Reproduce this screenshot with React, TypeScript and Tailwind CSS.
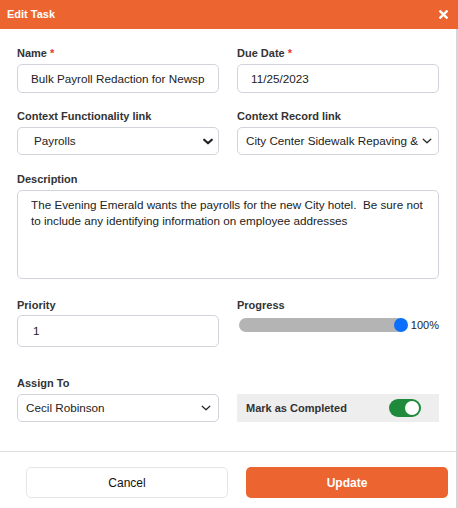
import React from 'react';

const Chevron = ({ bold }: { bold?: boolean }) => (
    <svg
        className={bold ? 'w-[10px] h-[7px] shrink-0' : 'w-[10px] h-[6px] shrink-0'}
        viewBox="0 0 10 6"
        fill="none"
        stroke="#222"
        strokeWidth={bold ? 2.2 : 1.2}
        strokeLinecap="round"
        strokeLinejoin="round"
    >
        <path d="M1.2 1.2L5 4.8l3.8-3.6" />
    </svg>
);

const Label = ({ children, required }: { children: React.ReactNode; required?: boolean }) => (
    <div className="text-[11px] leading-[13px] font-bold text-[#333]">
        {children}
        {required && <span className="text-[#e53935]"> *</span>}
    </div>
);

export default function App() {
    return (
        <div className="w-[458px] h-[508px] bg-white font-['Liberation_Sans',Arial,sans-serif] flex flex-col">
            {/* Header */}
            <div className="h-[29px] bg-[#ec6430] flex items-center justify-between pl-[7px] pr-[10px] shrink-0">
                <span className="text-white text-[11px] font-bold">Edit Task</span>
                <svg className="w-[9px] h-[9px]" viewBox="0 0 10 10" stroke="white" strokeWidth="2.6" strokeLinecap="square">
                    <path d="M1.5 1.5l7 7M8.5 1.5l-7 7" />
                </svg>
            </div>

            {/* Body */}
            <div className="flex-1 border-r-2 border-[#d6d6d6] flex flex-col">
                <div className="px-[17px] pt-[18px] h-[423px] border-b border-[#dedede]">
                    {/* Row 1 */}
                    <div className="grid grid-cols-2 gap-x-[18px]">
                        <div>
                            <Label required>Name</Label>
                            <div className="mt-[4px] h-[29px] border border-[#d2d4dc] rounded-[5px] pl-[13px] pr-[13px] flex items-center overflow-hidden">
                                <span className="text-[11.7px] text-[#222] whitespace-nowrap">Bulk Payroll Redaction for Newsp</span>
                            </div>
                        </div>
                        <div>
                            <Label required>Due Date</Label>
                            <div className="mt-[4px] h-[29px] border border-[#d2d4dc] rounded-[5px] pl-[13px] flex items-center">
                                <span className="text-[11.7px] text-[#222]">11/25/2023</span>
                            </div>
                        </div>
                    </div>

                    {/* Row 2 */}
                    <div className="grid grid-cols-2 gap-x-[18px] mt-[17px]">
                        <div>
                            <Label>Context Functionality link</Label>
                            <div className="mt-[4px] h-[28px] border border-[#d2d4dc] rounded-[5px] pl-[16px] pr-[5px] flex items-center justify-between">
                                <span className="text-[11.7px] text-[#222]">Payrolls</span>
                                <Chevron bold />
                            </div>
                        </div>
                        <div>
                            <Label>Context Record link</Label>
                            <div className="mt-[4px] h-[28px] border border-[#d2d4dc] rounded-[5px] pl-[8px] pr-[6px] flex items-center justify-between gap-[3px]">
                                <span className="text-[11.7px] text-[#222] whitespace-nowrap">City Center Sidewalk Repaving &amp;</span>
                                <Chevron />
                            </div>
                        </div>
                    </div>

                    {/* Row 3 */}
                    <div className="mt-[18px]">
                        <Label>Description</Label>
                        <div className="mt-[4px] h-[89px] border border-[#d2d4dc] rounded-[5px] pl-[13px] pr-[8px] pt-[6px] text-[11.7px] leading-[16px] text-[#222] whitespace-pre-wrap">
                            {'The Evening Emerald wants the payrolls for the new City hotel.  Be sure not to include any identifying information on employee addresses'}
                        </div>
                    </div>

                    {/* Row 4 */}
                    <div className="grid grid-cols-2 gap-x-[18px] mt-[20px]">
                        <div>
                            <Label>Priority</Label>
                            <div className="mt-[3px] h-[32px] border border-[#d2d4dc] rounded-[5px] pl-[15px] flex items-center">
                                <span className="text-[11.7px] text-[#222]">1</span>
                            </div>
                        </div>
                        <div>
                            <Label>Progress</Label>
                            <div className="mt-[5px] pl-[2px] flex items-center">
                                <div className="relative w-[167px] h-[14px] rounded-full bg-[#b4b4b4]">
                                    <div className="absolute right-[-3px] top-1/2 -translate-y-1/2 w-[14px] h-[14px] rounded-full bg-[#0b6ffd]" />
                                </div>
                                <span className="ml-[6px] text-[11px] text-[#222]">100%</span>
                            </div>
                        </div>
                    </div>

                    {/* Row 5 */}
                    <div className="grid grid-cols-2 gap-x-[18px] mt-[30px]">
                        <div>
                            <Label>Assign To</Label>
                            <div className="mt-[4px] h-[28px] border border-[#d2d4dc] rounded-[5px] pl-[8px] pr-[7px] flex items-center justify-between">
                                <span className="text-[11.7px] text-[#222]">Cecil Robinson</span>
                                <Chevron />
                            </div>
                        </div>
                        <div className="pt-[17px]">
                            <div className="h-[28px] bg-[#eeeeee] pl-[9px] pr-[18px] flex items-center justify-between">
                                <span className="text-[11px] font-bold text-[#333]">Mark as Completed</span>
                                <div className="w-[32px] h-[18px] rounded-full bg-[#1f8a3b] flex items-center justify-end pr-[2px]">
                                    <div className="w-[14px] h-[14px] rounded-full bg-white" />
                                </div>
                            </div>
                        </div>
                    </div>
                </div>

                {/* Footer */}
                <div className="flex gap-[18px] pl-[26px] pt-[15px]">
                    <button className="w-[202px] h-[31px] border border-[#e6e6e6] rounded-[5px] bg-white text-[12px] text-[#111]">
                        Cancel
                    </button>
                    <button className="w-[202px] h-[31px] rounded-[5px] bg-[#ec6430] text-[12px] font-bold text-white">
                        Update
                    </button>
                </div>
            </div>
        </div>
    );
}
